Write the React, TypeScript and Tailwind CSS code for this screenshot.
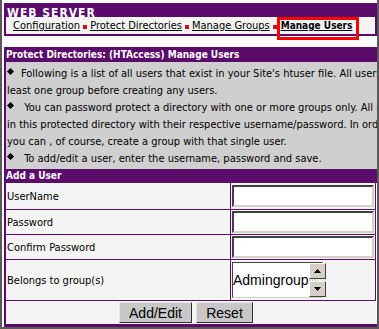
import React from 'react';

function Bullet() {
  return <span className="inline-block w-[5px] h-[5px] bg-black rotate-45 align-top mt-[4px] ml-[1px] mr-[8px]" />;
}

function NavSep() {
  return <span className="inline-block w-[4px] h-[4px] bg-[#e0001b] mx-[3px] mt-[3px]" />;
}

function TextInput() {
  return (
    <input
      type="text"
      className="block w-[142px] h-[22px] bg-white border-2 border-t-[#404040] border-l-[#404040] border-b-[#d4d0c8] border-r-[#d4d0c8] outline-none"
    />
  );
}

function ScrollButton({ down }: { down?: boolean }) {
  return (
    <div className="w-[17px] h-[16px] bg-[#d4d0c8] border border-t-white border-l-white border-b-[#404040] border-r-[#404040] flex items-center justify-center">
      <svg width="7" height="4" viewBox="0 0 7 4">
        {down ? <polygon points="0,0 7,0 3.5,4" fill="#000" /> : <polygon points="0,4 7,4 3.5,0" fill="#000" />}
      </svg>
    </div>
  );
}

export default function App() {
  const rows = ['UserName', 'Password', 'Confirm Password'];

  return (
    <div className="w-[379px] h-[329px] overflow-hidden bg-white border-x-2 border-b-2 border-[#5a5a5a] pl-[2px] pt-[3px] font-['DejaVu_Sans_Condensed','DejaVu_Sans',sans-serif] text-[11px] text-black leading-none">
      {/* top box */}
      <div className="border-2 border-[#5b0b69]">
        <div className="h-[12px] bg-[#5b0b69] text-white font-bold text-[12px] tracking-[1px] pl-[1px] pt-[2px] leading-[12px]">WEB SERVER</div>
        <div className="h-[17px] bg-[#f4f4f4] flex items-center pl-[7px] whitespace-nowrap">
          <span className="underline">Configuration</span>
          <NavSep />
          <span className="underline">Protect Directories</span>
          <NavSep />
          <span className="underline">Manage Groups</span>
          <NavSep />
          <span className="underline font-bold text-[10px] relative ml-[1px]">
            Manage Users
            <span className="absolute -left-[4px] -right-[7px] -top-[4px] -bottom-[9px] border-[3px] border-[#ff0000]" />
          </span>
        </div>
      </div>

      {/* info */}
      <div className="mt-[11px]">
        <div className="h-[15px] bg-[#5b0b69] text-white font-bold text-[10px] pl-[2px] flex items-center whitespace-nowrap">
          Protect Directories: (HTAccess) Manage Users
        </div>
        <div className="bg-[#cfcfcf] border-l-2 border-[#5b0b69] h-[107px] overflow-hidden whitespace-nowrap pt-[3px] pl-[1px] leading-[17px]">
          <div><Bullet />Following is a list of all users that exist in your Site's htuser file. All users must belong to at</div>
          <div>least one group before creating any users.</div>
          <div><Bullet /> You can password protect a directory with one or more groups only. All users</div>
          <div>in this protected directory with their respective username/password. In order to protect with one user,</div>
          <div>you can , of course, create a group with that single user.</div>
          <div><Bullet /> To add/edit a user, enter the username, password and save.</div>
        </div>
      </div>

      {/* form */}
      <div>
        <div className="h-[14px] bg-[#5b0b69] text-white font-bold text-[10px] pl-[2px] flex items-center">Add a User</div>
        {rows.map((label, i) => (
          <div
            key={label}
            className={`flex border-b border-[#5b0b69] w-[372px] ${i === 0 ? 'h-[27px]' : 'h-[25px]'}`}
          >
            <div className="w-[226px] bg-[#f4f4f4] border-l-2 border-[#5b0b69] pl-[1px] flex items-center">{label}</div>
            <div className={`w-[146px] bg-[#f4f4f4] border-x border-[#5b0b69] pl-[1px] ${i === 0 ? 'pt-[2px]' : 'pt-[1px]'}`}>
              <TextInput />
            </div>
          </div>
        ))}
        <div className="flex h-[41px] border-b border-[#5b0b69] w-[372px]">
          <div className="w-[226px] bg-[#f4f4f4] border-l-2 border-[#5b0b69] pl-[1px] flex items-center">Belongs to group(s)</div>
          <div className="w-[146px] bg-[#f4f4f4] border-x border-[#5b0b69] pl-[1px] pt-[2px]">
            <div className="w-[91px] h-[36px] bg-white border border-t-[#404040] border-l-[#404040] border-b-[#d4d0c8] border-r-[#d4d0c8] flex">
              <div className="flex-1 flex items-center font-['Liberation_Sans',sans-serif] text-[14px]">Admingroup</div>
              <div className="w-[17px] flex flex-col justify-between bg-[repeating-linear-gradient(45deg,#d4d0c8_0px,#d4d0c8_1px,#ffffff_1px,#ffffff_2px)]">
                <ScrollButton />
                <ScrollButton down />
              </div>
            </div>
          </div>
        </div>
        <div className="h-[23px] bg-[#f4f4f4] border-l-2 border-[#5b0b69] flex items-start pt-[1px] pl-[113px] gap-[4px] font-['Liberation_Sans',sans-serif] text-[14px]">
          <button className="w-[73px] h-[21px] bg-[#c8c8c8] border border-t-[#e8e8e8] border-l-[#e8e8e8] border-b-[#303030] border-r-[#303030]">Add/Edit</button>
          <button className="w-[57px] h-[21px] bg-[#c8c8c8] border border-t-[#e8e8e8] border-l-[#e8e8e8] border-b-[#303030] border-r-[#303030]">Reset</button>
        </div>
        <div className="h-[3px] bg-[#5b0b69]" />
      </div>
    </div>
  );
}
